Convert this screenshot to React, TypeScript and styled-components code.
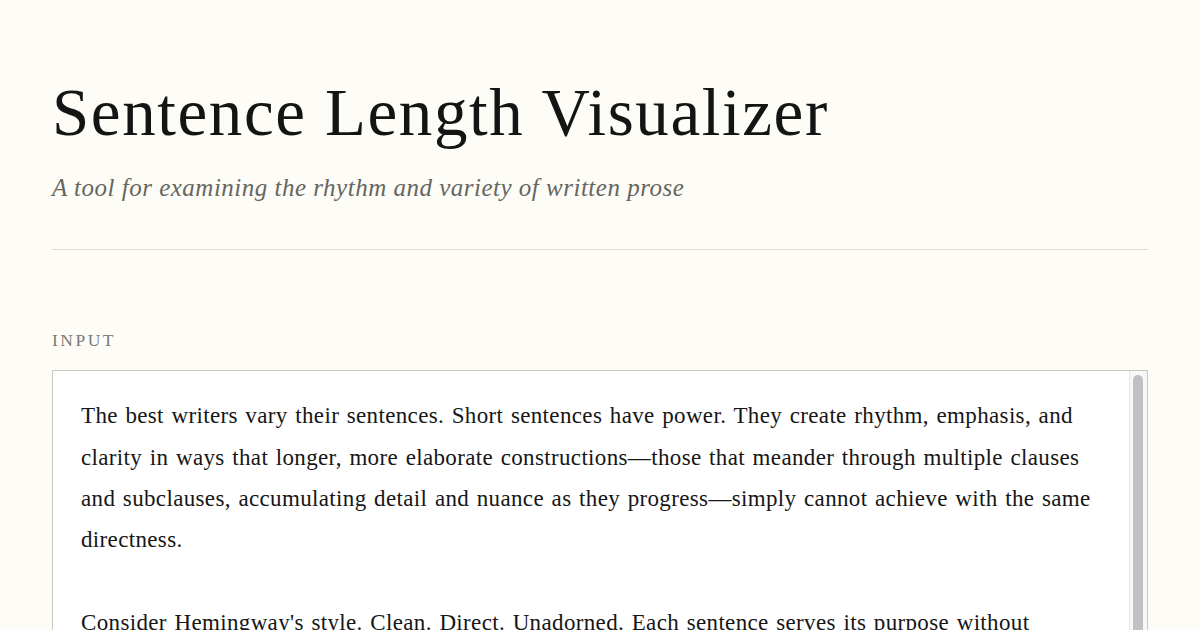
import React from 'react'
import styled, { createGlobalStyle } from 'styled-components'

const GlobalStyle = createGlobalStyle`
  html, body {
    margin: 0;
    padding: 0;
    background: #fdfcf7;
  }
  body {
    font-family: "Liberation Serif", "DejaVu Serif", serif;
    color: #1a1a1a;
  }
`

const Page = styled.main`
  max-width: 1096px;
  margin: 0 auto;
  padding: 72px 52px 0;
`

const Header = styled.header`
  padding-bottom: 47px;
  border-bottom: 1px solid #dedbd3;
`

const Title = styled.h1`
  margin: 0;
  font-size: 67px;
  font-weight: 400;
  line-height: 1.2;
  letter-spacing: 1.6px;
  color: #141414;
`

const Subtitle = styled.p`
  margin: 22px 0 0;
  font-size: 25px;
  font-style: italic;
  letter-spacing: 0.5px;
  color: #66665f;
`

const Section = styled.section`
  padding-top: 80px;
`

const Label = styled.label`
  display: block;
  margin-bottom: 19px;
  font-size: 17.5px;
  letter-spacing: 2.5px;
  text-transform: uppercase;
  color: #7a7a74;
`

const Field = styled.div`
  display: flex;
  height: 380px;
  border: 1px solid #c9c7c1;
  background: #ffffff;
  overflow: hidden;
`

const TextArea = styled.textarea`
  flex: 1;
  display: block;
  box-sizing: border-box;
  min-width: 0;
  height: 100%;
  margin: 0;
  padding: 24px 28px;
  border: 0;
  border-radius: 0;
  background: transparent;
  font-family: "Liberation Serif", "DejaVu Serif", serif;
  font-size: 23px;
  line-height: 41.3px;
  letter-spacing: 0.35px;
  word-spacing: 1.5px;
  color: #161616;
  resize: none;
  outline: none;
  overflow: hidden;
`

const ScrollTrack = styled.div`
  flex: 0 0 18px;
  box-sizing: border-box;
  padding: 4px 4px 0 3px;
  background: #f8f8f8;
  border-left: 1px solid #e6e6e6;
`

const ScrollThumb = styled.div<{ $length: number }>`
  height: ${(p) => p.$length}px;
  border-radius: 5px;
  background: #c1c1c1;
`

const sample = `The best writers vary their sentences. Short sentences have power. They create rhythm, emphasis, and clarity in ways that longer, more elaborate constructions\u2014those that meander through multiple clauses and subclauses, accumulating detail and nuance as they progress\u2014simply cannot achieve with the same directness.

Consider Hemingway's style. Clean. Direct. Unadorned. Each sentence serves its purpose without ornament, and the reader feels the weight of every word.

Now compare Faulkner, whose sentences sprawl across pages, folding memory into the present moment.`

export default function App() {
  return (
    <>
      <GlobalStyle />
      <Page>
        <Header>
          <Title>Sentence Length Visualizer</Title>
          <Subtitle>A tool for examining the rhythm and variety of written prose</Subtitle>
        </Header>
        <Section>
          <Label htmlFor="prose">Input</Label>
          <Field>
            <TextArea id="prose" defaultValue={sample} spellCheck={false} />
            <ScrollTrack>
              <ScrollThumb $length={320} />
            </ScrollTrack>
          </Field>
        </Section>
      </Page>
    </>
  )
}
